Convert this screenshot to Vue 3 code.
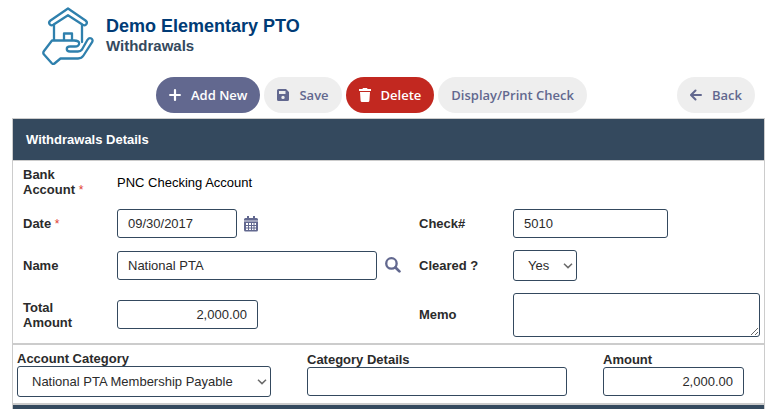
<script setup>
import { ref } from 'vue'

const date = ref('09/30/2017')
const name = ref('National PTA')
const total = ref('2,000.00')
const checkNo = ref('5010')
const cleared = ref('Yes')
const memo = ref('')
const category = ref('National PTA Membership Payable')
const details = ref('')
const amount = ref('2,000.00')
</script>

<template>
  <div class="page">
    <header class="brand">
      <svg class="logo" viewBox="0 0 56 60" fill="none" stroke="#2f80ad" stroke-width="2.300" stroke-linejoin="round" stroke-linecap="round" aria-hidden="true">
        <path d="M28 3.500 10.500 15.500c-3 2.300-.4 6.200 2.800 4.300L28 10.200l14.700 9.600c3.200 1.900 5.800-2 2.800-4.300z" />
        <path d="M14 20v15M42 20v17" />
        <path d="M24 35v-6.500h8V35" />
        <path d="M12 35.500h22c7 0 6.500 6 1 6h-5c-4.300 0-4.300 5 0 5h8c2 0 3-.6 4-2l5.500-9.700c2.200-3.300 6.500-1 4.600 2.400L43.500 50.500C42 53 40.500 53.500 38 53.500H20.500L14.500 58.500c-1 .8-1.800.7-2.700-.2L4 49.500c-1-1.100-.9-2.200 0-3.500z" />
      </svg>
      <div>
        <h1>Demo Elementary PTO</h1>
        <h2>Withdrawals</h2>
      </div>
    </header>

    <nav class="toolbar">
      <button type="button" class="btn primary">
        <svg width="12" height="12" viewBox="0 0 12 12" fill="none" stroke="currentColor" stroke-width="2.200" stroke-linecap="round"><path d="M6 1.100v9.800M1.100 6h9.800" /></svg>
        Add New
      </button>
      <button type="button" class="btn">
        <svg width="12" height="12" viewBox="0 0 12 12" fill="currentColor" fill-rule="evenodd"><path d="M1.500 0H9l3 3v7.500a1.500 1.500 0 0 1-1.500 1.500h-9A1.500 1.500 0 0 1 0 10.500v-9A1.500 1.500 0 0 1 1.500 0zM2 2v3h6.500V2zM6 6.700a1.700 1.700 0 1 0 0 3.400 1.700 1.700 0 0 0 0-3.400z" /></svg>
        Save
      </button>
      <button type="button" class="btn danger">
        <svg width="12" height="14" viewBox="0 0 12 14" fill="currentColor"><path d="M4 0h4l.6 1H12v2H0V1h3.400zM1 4h10l-.6 8.700A1.400 1.400 0 0 1 9 14H3a1.400 1.400 0 0 1-1.400-1.300z" /></svg>
        Delete
      </button>
      <button type="button" class="btn">Display/Print Check</button>
      <button type="button" class="btn back">
        <svg width="12" height="12" viewBox="0 0 12 12" fill="none" stroke="currentColor" stroke-width="2" stroke-linecap="round" stroke-linejoin="round"><path d="M11 6H1.500M5.500 1.500 1 6l4.500 4.500" /></svg>
        Back
      </button>
    </nav>

    <main class="panel">
      <h3>Withdrawals Details</h3>

      <form class="fields" @submit.prevent>
        <span class="label">Bank<br />Account <i>*</i></span>
        <span class="value wide">PNC Checking Account</span>

        <label for="date">Date <i>*</i></label>
        <div class="cell">
          <input id="date" v-model="date" class="short" type="text" />
          <button type="button" class="icon" aria-label="Pick a date">
            <svg width="14" height="16" viewBox="0 0 14 16" fill="currentColor" fill-rule="evenodd"><path d="M3 0h2v2h4V0h2v2h1.500A1.500 1.500 0 0 1 14 3.500V4H0v-.5A1.500 1.500 0 0 1 1.500 2H3z" /><path opacity=".6" d="M0 4h14v2H0z" /><path d="M0 6h14v8a1.500 1.500 0 0 1-1.500 1.500h-11A1.500 1.500 0 0 1 0 14zM2 7v2h2V7zM5 7v2h2V7zM8 7v2h1.500V7zM10.500 7v2H12V7zM2 10v1.500h2V10zM5 10v1.500h2V10zM8 10v1.500h1.500V10zM10.500 10v1.500H12V10zM2 12.500V14h2v-1.500zM5 12.500V14h2v-1.500zM8 12.500V14h1.500v-1.500zM10.500 12.500V14H12v-1.500z" /></svg>
          </button>
        </div>
        <label for="check">Check#</label>
        <div class="cell"><input id="check" v-model="checkNo" class="check" type="text" /></div>

        <label for="name">Name</label>
        <div class="cell">
          <input id="name" v-model="name" class="long" type="text" />
          <button type="button" class="icon" aria-label="Find a name">
            <svg width="17" height="16" viewBox="-1 0 16 15" fill="none" stroke="currentColor"><circle cx="6" cy="6" r="4.900" stroke-width="2.200" /><path d="m9.800 9.800 3.700 3.700" stroke-width="2.600" stroke-linecap="round" /></svg>
          </button>
        </div>
        <label for="cleared">Cleared ?</label>
        <div class="cell">
          <div class="select yesno">
            <select id="cleared" v-model="cleared">
              <option>Yes</option>
              <option>No</option>
            </select>
            <svg class="chevron" width="10" height="6" viewBox="0 0 10 6" fill="none" stroke="#6b6b6b" stroke-width="1.500"><path d="M1 .8 5 4.600 9 .8" /></svg>
          </div>
        </div>

        <label for="total">Total<br />Amount</label>
        <div class="cell"><input id="total" v-model="total" class="money" type="text" /></div>
        <label for="memo">Memo</label>
        <div class="cell"><textarea id="memo" v-model="memo"></textarea></div>
      </form>

      <section class="split">
        <div>
          <label for="category">Account Category</label>
          <div class="select category">
            <select id="category" v-model="category">
              <option>National PTA Membership Payable</option>
            </select>
            <svg class="chevron" width="10" height="6" viewBox="0 0 10 6" fill="none" stroke="#6b6b6b" stroke-width="1.500"><path d="M1 .8 5 4.600 9 .8" /></svg>
          </div>
        </div>
        <div>
          <label for="details">Category Details</label>
          <input id="details" v-model="details" class="long" type="text" />
        </div>
        <div>
          <label for="amount">Amount</label>
          <input id="amount" v-model="amount" class="money" type="text" />
        </div>
      </section>
      <div class="bar"></div>
    </main>
  </div>
</template>

<style>
body {
  margin: 0;
  background: #fff;
}
</style>

<style scoped>
.page,
.page input,
.page select,
.page textarea {
  font-family: "Liberation Sans", Arial, sans-serif;
  font-size: 13px;
  color: #2b2b2b;
  box-sizing: border-box;
}
.page {
  padding: 0 12px;
}
.brand {
  display: flex;
  padding: 5px 0 0 28px;
  gap: 10px;
  height: 72px;
  box-sizing: border-box;
}
.logo {
  width: 56px;
  height: 60px;
}
h1,
h2,
h3 {
  margin: 0;
}
h1 {
  padding-top: 10px;
  font-size: 18px;
  line-height: 22px;
  color: #003b76;
}
h2 {
  font-size: 15px;
  line-height: 18px;
  color: #34495e;
}
.toolbar {
  display: flex;
  gap: 4px;
  padding: 5px 10px 5px 144px;
}
.btn {
  display: flex;
  align-items: center;
  gap: 10px;
  height: 36px;
  padding: 0 13px;
  border: 0;
  border-radius: 18px;
  background: #eee;
  color: #62688f;
  font-family: "Open Sans", "Noto Sans", sans-serif;
  font-size: 13px;
  font-weight: 600;
  white-space: nowrap;
}
.primary {
  background: #62688f;
  color: #fff;
}
.danger {
  background: #c22820;
  color: #fff;
}
.back {
  margin-left: auto;
}
.panel {
  border: 1px solid #ccc;
  border-bottom: 0;
}
h3 {
  padding: 0 13px;
  background: #34495e;
  color: #fff;
  font-size: 13px;
  line-height: 41px;
}
.fields {
  display: grid;
  grid-template-columns: 94px 302px 94px 1fr;
  grid-template-rows: 42px 41px 42px 57px;
  align-items: center;
  padding: 0 4px 0 10px;
  border-top: 1px solid #ccc;
}
.wide {
  grid-column: 2 / -1;
}
.value {
  color: #000;
}
label,
.label {
  font-size: 13px;
  font-weight: 700;
  line-height: 15px;
}
i {
  color: #e03c31;
  font-size: 12px;
  font-style: normal;
  font-weight: 400;
}
.cell {
  display: flex;
  align-items: center;
  gap: 7px;
}
.page input,
.page select,
.page textarea {
  height: 29px;
  margin: 0;
  padding: 0 10px;
  border: 1px solid #34495e;
  border-radius: 3px;
  background: #fff;
}
.select {
  position: relative;
}
.page select {
  display: block;
  width: 100%;
  height: 31px;
  padding: 0 14px;
  appearance: none;
}
.chevron {
  position: absolute;
  top: 13px;
  right: 4px;
  pointer-events: none;
}
.page textarea {
  display: block;
  width: 100%;
  height: 44px;
}
.page .short {
  width: 120px;
}
.page .check {
  width: 155px;
}
.page .long {
  width: 260px;
}
.page .money {
  width: 141px;
  text-align: right;
}
.yesno {
  width: 64px;
}
.category {
  width: 254px;
}
.icon {
  display: flex;
  padding: 0;
  border: 0;
  background: none;
  color: #62688f;
}
.split {
  display: grid;
  grid-template-columns: 290px 296px 1fr;
  align-items: center;
  padding: 6px 4px;
  border-top: 2px solid #ccc;
  border-bottom: 2px solid #ccc;
}
.split > div {
  display: flex;
  flex-direction: column;
  align-items: flex-start;
}
.bar {
  height: 5px;
  background: #34495e;
}
</style>
